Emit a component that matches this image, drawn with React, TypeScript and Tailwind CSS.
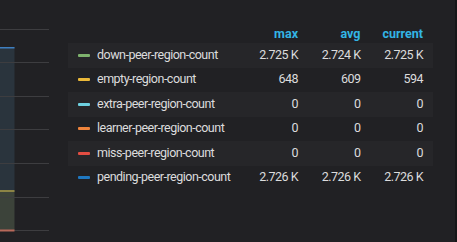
import React from 'react';

interface Series {
  name: string;
  color: string;
  max: string;
  avg: string;
  current: string;
}

const series: Series[] = [
  { name: 'down-peer-region-count', color: 'bg-[#7eb26d]', max: '2.725 K', avg: '2.724 K', current: '2.725 K' },
  { name: 'empty-region-count', color: 'bg-[#eab839]', max: '648', avg: '609', current: '594' },
  { name: 'extra-peer-region-count', color: 'bg-[#6ed0e0]', max: '0', avg: '0', current: '0' },
  { name: 'learner-peer-region-count', color: 'bg-[#ef843c]', max: '0', avg: '0', current: '0' },
  { name: 'miss-peer-region-count', color: 'bg-[#e24d42]', max: '0', avg: '0', current: '0' },
  { name: 'pending-peer-region-count', color: 'bg-[#1f78c1]', max: '2.726 K', avg: '2.726 K', current: '2.726 K' },
];

const gridY = [29.5, 62.5, 96.5, 129.5, 163.5, 197.5, 230.5];

function ChartEdge() {
  return (
    <svg width="49" height="242" className="shrink-0">
      <rect x="0" y="47" width="14.5" height="144" fill="#2a343d" />
      <rect x="0" y="191" width="14.5" height="39" fill="#3c433a" />
      {gridY.map((y) => (
        <line key={y} x1="0" x2="49" y1={y} y2={y} stroke="#3d3d40" strokeWidth="1" />
      ))}
      <rect x="0" y="47" width="14.5" height="1.5" fill="#3f7fc0" />
      <rect x="0" y="190" width="14.5" height="2" fill="#8c8445" />
      <rect x="0" y="229.5" width="14.5" height="2" fill="#b8695a" />
    </svg>
  );
}

export default function App() {
  return (
    <div
      className="flex w-[457px] h-[242px] bg-[#212124] overflow-hidden text-[12.5px] text-[#dcdcdd]"
      style={{ fontFamily: 'Roboto, "Liberation Sans", sans-serif' }}
    >
      <ChartEdge />
      <div className="ml-[19px] pt-[25px] w-[365px] shrink-0">
        <div className="flex h-[18px] items-center font-bold text-[12.5px] text-[#33b5e5]">
          <div className="w-[177.5px]" />
          <div className="w-[62.5px] pr-[10px] text-right">max</div>
          <div className="w-[62.5px] pr-[10px] text-right">avg</div>
          <div className="w-[62.5px] pr-[10px] text-right">current</div>
        </div>
        {series.map((s, i) => (
          <div
            key={s.name}
            className={`flex h-[24.5px] items-center tracking-[-0.5px] ${i % 2 === 0 ? 'bg-[#262629]' : ''}`}
          >
            <div className="w-[177.5px] flex items-center pl-[10px] gap-[7px]">
              <span className={`w-[12px] h-[3px] rounded-[1px] ${s.color}`} />
              <span className="whitespace-nowrap">{s.name}</span>
            </div>
            <div className="w-[62.5px] pr-[10px] text-right whitespace-nowrap">{s.max}</div>
            <div className="w-[62.5px] pr-[10px] text-right whitespace-nowrap">{s.avg}</div>
            <div className="w-[62.5px] pr-[10px] text-right whitespace-nowrap">{s.current}</div>
          </div>
        ))}
      </div>
      <div className="flex-1" />
      <div className="w-[2px] bg-[#161719]" />
    </div>
  );
}
